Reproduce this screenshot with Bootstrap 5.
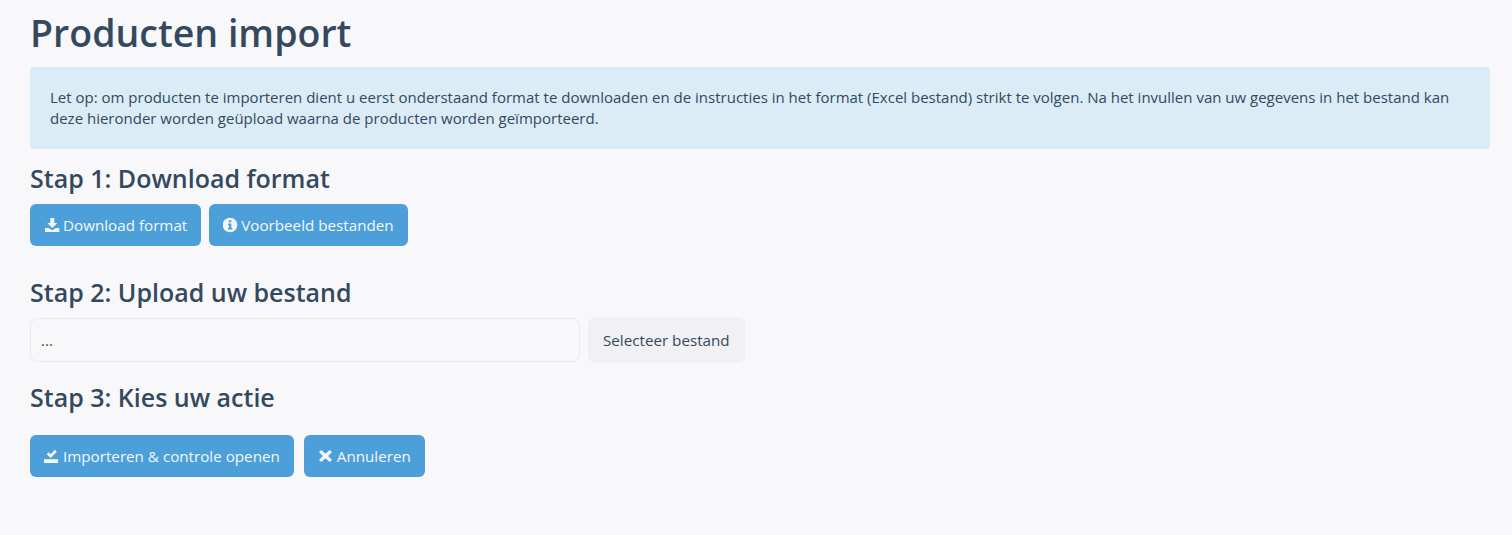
<!DOCTYPE html>
<html lang="nl">
<head>
<meta charset="utf-8">
<title>Producten import</title>
<link href="https://cdn.jsdelivr.net/npm/bootstrap@5.3.0/dist/css/bootstrap.min.css" rel="stylesheet">
<style>
body{background:#f8f8fb;font-family:"Open Sans",sans-serif;font-size:15px;line-height:21px;color:#34495e}
.page-wrap{padding:9px 22px 0 30px}
.page-title{font-size:37.5px;line-height:47px;font-weight:600;color:#34495e;margin:0 0 11px}
.step-title{font-size:25px;line-height:30px;font-weight:600;color:#34495e;margin:0 0 11px}
.step-two{margin-top:31px}
.step-three{margin-top:20px;margin-bottom:23px}
.note-box{background:#dbecf7;color:#34495e;border:0;border-radius:4px;padding:20px;margin:0 0 14px;line-height:21px;font-size:15px}
.act-btn{background:#4d9fd9;border:0;color:#f3f7fb;height:42px;border-radius:6px;font-size:15.2px;font-weight:400;padding:0 14px;display:inline-flex;align-items:center;gap:3px}
.act-btn:hover{background:#4d9fd9;color:#f3f7fb}
.act-btn svg{fill:currentColor;flex:none}
.file-name{width:550px;height:44px;background:#f8f8fb;border:1px solid #e9e9ec;border-radius:8px;padding:0 10px;font-size:15px;color:#5d3a2a}
.file-btn{background:#f1f1f3;border:1px solid #eeeef0;color:#34495e;height:44px;border-radius:6px;font-size:15.2px;font-weight:400;padding:0 14px}
.file-btn:hover{background:#f1f1f3;color:#34495e}
.action-row{gap:10px!important}
</style>
</head>
<body>
<div class="page-wrap">
  <h1 class="page-title">Producten import</h1>
  <div class="alert note-box">Let op: om producten te importeren dient u eerst onderstaand format te downloaden en de instructies in het format (Excel bestand) strikt te volgen. Na het invullen van uw gegevens in het bestand kan deze hieronder worden geüpload waarna de producten worden geïmporteerd.</div>

  <h2 class="step-title">Stap 1: Download format</h2>
  <div class="d-flex gap-2 step-one">
    <a class="btn act-btn" href="#"><svg width="16" height="16" viewBox="0 0 16 16"><path d="M6.300 1h4v5h3L8.300 11 3.300 6h3z"/><path d="M1 11h3.500l3.800 2.200L12 11h3.300v4H1z"/></svg>Download format</a>
    <a class="btn act-btn" href="#"><svg width="15" height="16" viewBox="0 0 15 16"><path fill-rule="evenodd" d="M7 .7a7.300 7.300 0 1 0 0 14.600A7.300 7.300 0 0 0 7 .7zM5.800 3.200h2.500v2.100H5.800zM5 6.400h3.300v4.500h1.100v1.700H5v-1.700h1V8.100H5z"/></svg>Voorbeeld bestanden</a>
  </div>

  <h2 class="step-title step-two">Stap 2: Upload uw bestand</h2>
  <div class="d-flex gap-2 upload-row">
    <input class="form-control file-name" type="text" value="...">
    <button class="btn file-btn" type="button">Selecteer bestand</button>
  </div>

  <h2 class="step-title step-three">Stap 3: Kies uw actie</h2>
  <div class="d-flex gap-2 action-row">
    <a class="btn act-btn" href="#"><svg width="16" height="16" viewBox="0 0 16 16"><path d="M2.700 6.200l2-2 2 2L10.800 1.800l2 2-6.100 6.200z"/><path d="M0 11.200h14V15H0z"/></svg>Importeren &amp; controle openen</a>
    <a class="btn act-btn" href="#"><svg width="16" height="16" viewBox="0 0 16 16"><path d="M3.300 2L7.500 5.700 11.700 2l2.300 2.300-3.900 3.700 3.900 3.700-2.300 2.300-4.200-3.700L3.300 14 1 11.700 4.900 8 1 4.300z"/></svg>Annuleren</a>
  </div>
</div>
</body>
</html>
